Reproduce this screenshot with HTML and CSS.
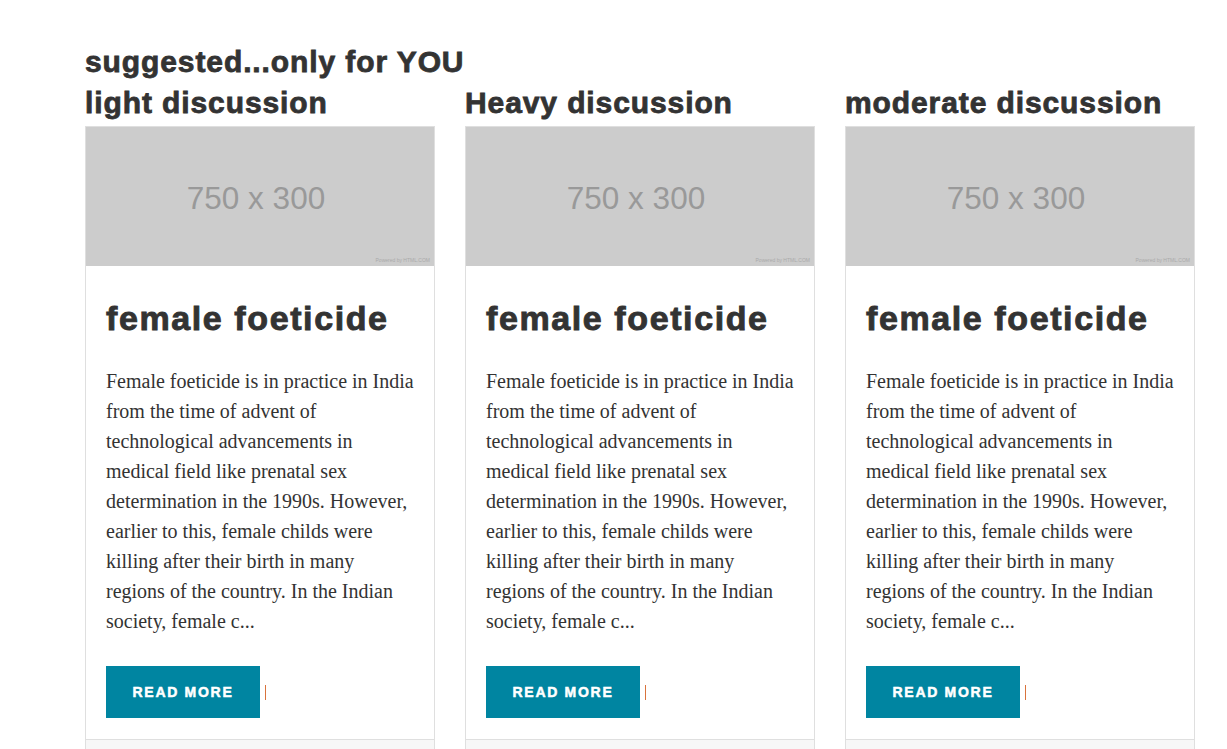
FILE: index.html
```html
<!DOCTYPE html>
<html>
<head>
<meta charset="utf-8">
<link rel="stylesheet" href="styles.css">
</head>
<body>
<div class="page">
  <h2 class="section-title">suggested...only for YOU</h2>
  <div class="columns">
    <div class="column">
      <h2 class="column-title">light discussion</h2>
      <div class="card">
        <div class="placeholder"><span class="ph-size">750 x 300</span><span class="ph-credit">Powered by HTML.COM</span></div>
        <div class="card-body">
          <h2 class="card-title">female foeticide</h2>
          <p class="card-text">Female foeticide is in practice in India from the time of advent of technological advancements in medical field like prenatal sex determination in the 1990s. However, earlier to this, female childs were killing after their birth in many regions of the country. In the Indian society, female c...</p>
          <div class="actions"><a class="btn" href="#">Read More</a><span class="caret"></span></div>
        </div>
        <div class="card-footer"></div>
      </div>
    </div>
    <div class="column">
      <h2 class="column-title">Heavy discussion</h2>
      <div class="card">
        <div class="placeholder"><span class="ph-size">750 x 300</span><span class="ph-credit">Powered by HTML.COM</span></div>
        <div class="card-body">
          <h2 class="card-title">female foeticide</h2>
          <p class="card-text">Female foeticide is in practice in India from the time of advent of technological advancements in medical field like prenatal sex determination in the 1990s. However, earlier to this, female childs were killing after their birth in many regions of the country. In the Indian society, female c...</p>
          <div class="actions"><a class="btn" href="#">Read More</a><span class="caret"></span></div>
        </div>
        <div class="card-footer"></div>
      </div>
    </div>
    <div class="column">
      <h2 class="column-title">moderate discussion</h2>
      <div class="card">
        <div class="placeholder"><span class="ph-size">750 x 300</span><span class="ph-credit">Powered by HTML.COM</span></div>
        <div class="card-body">
          <h2 class="card-title">female foeticide</h2>
          <p class="card-text">Female foeticide is in practice in India from the time of advent of technological advancements in medical field like prenatal sex determination in the 1990s. However, earlier to this, female childs were killing after their birth in many regions of the country. In the Indian society, female c...</p>
          <div class="actions"><a class="btn" href="#">Read More</a><span class="caret"></span></div>
        </div>
        <div class="card-footer"></div>
      </div>
    </div>
  </div>
</div>
</body>
</html>
```
FILE: styles.css
```css
html, body {
  margin: 0;
  padding: 0;
  background: #fff;
}
body {
  font-family: "Liberation Serif", "Times New Roman", serif;
  color: #333;
  overflow: hidden;
}
.page {
  padding: 44px 0 0 85px;
}
.section-title,
.column-title {
  font-family: "Liberation Sans", Arial, sans-serif;
  font-weight: 700;
  font-size: 30px;
  line-height: 36px;
  letter-spacing: 0.9px;
  -webkit-text-stroke: 0.8px #333;
  color: #333;
  margin: 0;
}
.columns {
  display: grid;
  grid-template-columns: repeat(3, 350px);
  column-gap: 30px;
  margin-top: 5px;
}
.column-title {
  margin-bottom: 5px;
}
.card {
  border: 1px solid #dfdfdf;
  background: #fff;
}
.placeholder {
  position: relative;
  height: 139px;
  background: #ccc;
  display: flex;
  align-items: center;
  justify-content: center;
}
.ph-size {
  font-family: "Liberation Sans", Arial, sans-serif;
  font-size: 31.5px;
  color: #999;
  margin-right: 8px;
  margin-top: 4px;
}
.ph-credit {
  position: absolute;
  right: 4px;
  bottom: 3px;
  font-family: "Liberation Sans", Arial, sans-serif;
  font-size: 5px;
  color: #aaa;
}
.card-body {
  padding: 32px 18px 21px 20px;
}
.card-title {
  font-family: "Liberation Sans", Arial, sans-serif;
  font-weight: 700;
  font-size: 34px;
  line-height: 41px;
  letter-spacing: 1.6px;
  -webkit-text-stroke: 0.9px #333;
  color: #333;
  margin: 0 0 27px 0;
}
.card-text {
  font-size: 20px;
  line-height: 30px;
  margin: 0 0 30px 0;
}
.actions {
  display: flex;
  align-items: center;
}
.btn {
  display: block;
  width: 154px;
  height: 52px;
  box-sizing: border-box;
  line-height: 53px;
  text-align: center;
  background: #0085a1;
  color: #fff;
  font-family: "Liberation Sans", Arial, sans-serif;
  font-weight: 700;
  font-size: 14px;
  letter-spacing: 1.7px;
  -webkit-text-stroke: 0.5px #fff;
  text-transform: uppercase;
  text-decoration: none;
}
.caret {
  display: block;
  width: 1px;
  height: 15px;
  margin-left: 5px;
  background: #d9733d;
}
.card-footer {
  height: 30px;
  border-top: 1px solid #dfdfdf;
  background: #f7f7f7;
}
```
